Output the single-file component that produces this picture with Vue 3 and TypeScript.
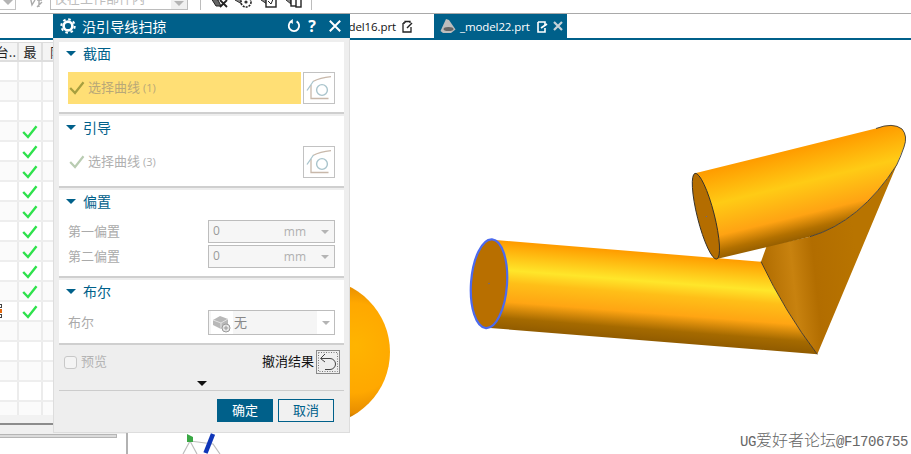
<script setup lang="ts">
const rows: number[] = Array.from({ length: 18 }, (_, i) => i)
const hasCheck = (i: number): boolean => i >= 3 && i <= 12
interface Sel { label: string; count: number; active: boolean }
const selections: Record<string, Sel> = {
  section: { label: '选择曲线', count: 1, active: true },
  guide: { label: '选择曲线', count: 3, active: false }
}
const offsets: string[] = ['第一偏置', '第二偏置']
</script>

<template>
  <div class="page">
    <div class="toolbar">
      <div class="tail"><span class="arrow grey"></span></div>
      <svg class="tb-undo" width="14" height="20" viewBox="0 0 14 20">
        <path d="M1 8 L3 17 L6 12 M8 12 H13 M10 12 V19 M13 14 L8 19" stroke="#aaa" stroke-width="1.4" fill="none" />
      </svg>
      <div class="tb-select">
        <span class="tb-text">仅在工作部件内</span>
        <span class="tb-drop"><span class="arrow grey"></span></span>
      </div>
      <i class="sep first"></i>
      <svg class="tb-icon i1" width="18" height="20" viewBox="0 0 18 20">
        <path d="M1 10 L8 12 L11 18 L6 18 Z" fill="#666" stroke="#222" />
        <path d="M10 12 L17 19 M17 12 L10 19" stroke="#222" stroke-width="1.8" />
      </svg>
      <svg class="tb-icon i2" width="18" height="20" viewBox="0 0 18 20">
        <path d="M0 12 L7 8 L11 10 L7 16 Z" fill="#888" stroke="#333" />
        <circle cx="11" cy="14" r="5" fill="#fff" stroke="#222" stroke-width="1.6" stroke-dasharray="2 1" />
        <circle cx="11" cy="14" r="1.6" fill="#333" />
      </svg>
      <svg class="tb-icon i3" width="18" height="20" viewBox="0 0 18 20">
        <path d="M1 12 L7 8 L7 16 Z" fill="#888" stroke="#333" />
        <rect x="6" y="6" width="10" height="13" fill="#fff" stroke="#222" stroke-width="1.4" />
        <path d="M8 13 L11 16 L14 9" stroke="#222" fill="none" />
      </svg>
      <svg class="tb-icon i4" width="18" height="20" viewBox="0 0 18 20">
        <path d="M1 12 L6 8 L6 16 Z" fill="#888" stroke="#333" />
        <rect x="6" y="5" width="6" height="13" fill="#fff" stroke="#222" stroke-width="1.4" />
        <rect x="11" y="9" width="5" height="10" fill="#fff" stroke="#222" stroke-width="1.4" />
      </svg>
      <i class="sep last"></i>
    </div>

    <div class="tabs">
      <div class="tab plain">
        <span>_model16.prt</span>
        <svg width="11" height="13" viewBox="0 0 11 13">
          <path d="M8 3 V1.5 H3 V3 M1 3 H3 M1 3 V12 H9 V7" stroke="#222" stroke-width="1.3" fill="none" />
          <path d="M5 8 L10 3" stroke="#222" stroke-width="1.4" />
        </svg>
      </div>
      <div class="tab active">
        <svg class="part" width="16" height="16" viewBox="0 0 16 16">
          <path d="M0.5 13 L6 1 L9 2 L15.5 11.5 L11 15 L3 15 Z" fill="#bdbdbd" />
          <ellipse cx="8.5" cy="11" rx="5" ry="2" fill="#666" />
        </svg>
        <span>_model22.prt</span>
        <svg class="doc" width="11" height="13" viewBox="0 0 11 13">
          <path d="M1 2 H8 V5 M1 2 V12 H8 V8" stroke="#fff" stroke-width="1.6" fill="none" />
          <path d="M4 8 L10 4" stroke="#fff" stroke-width="1.8" />
        </svg>
        <svg class="tabx" width="10" height="10" viewBox="0 0 10 10">
          <path d="M1 1 L9 9 M9 1 L1 9" stroke="#c7d2d8" stroke-width="2.2" />
        </svg>
      </div>
    </div>

    <div class="main">
      <div class="left">
        <div class="thead">
          <div class="c c1"><span>台..</span></div>
          <div class="c c2">最</div>
          <div class="c c3">限</div>
        </div>
        <div class="tbody">
          <div v-for="i in rows" :key="i" class="row" :class="{ alt: i % 2 === 1 }">
            <div class="c c1">
              <span v-if="i === 12" class="mini"><b></b><b class="o"></b><b></b></span>
            </div>
            <div class="c c2">
              <svg v-if="hasCheck(i)" width="16" height="14" viewBox="0 0 16 14">
                <path d="M1.2 7 L6 12 L14.5 1.2" stroke="#2ee24c" stroke-width="2.4" fill="none" />
              </svg>
            </div>
            <div class="c c3"></div>
          </div>
        </div>
        <div class="hscroll"></div>
        <div class="lower"></div>
        <div class="sash"></div>
      </div>

      <svg class="canvas" viewBox="128 40 783 414" width="783" height="414">
        <defs>
          <radialGradient id="ball" gradientUnits="userSpaceOnUse" cx="352" cy="350" r="75" fx="355" fy="345">
            <stop offset="0" stop-color="#ffb400" />
            <stop offset="0.6" stop-color="#ffa800" />
            <stop offset="0.85" stop-color="#e88e00" />
            <stop offset="1" stop-color="#7a4c00" />
          </radialGradient>
          <linearGradient id="tube" gradientUnits="userSpaceOnUse" x1="620" y1="251" x2="613" y2="341">
            <stop offset="0" stop-color="#ff9d00" />
            <stop offset="0.31" stop-color="#ffe62a" />
            <stop offset="0.45" stop-color="#ffbf18" />
            <stop offset="0.66" stop-color="#ffa513" />
            <stop offset="0.84" stop-color="#a56a00" />
            <stop offset="1" stop-color="#8c5800" />
          </linearGradient>
          <linearGradient id="upper" gradientUnits="userSpaceOnUse" x1="795" y1="150" x2="817" y2="240">
            <stop offset="0" stop-color="#ff9d00" />
            <stop offset="0.36" stop-color="#ffcb15" />
            <stop offset="0.7" stop-color="#ffa313" />
            <stop offset="0.86" stop-color="#b27000" />
            <stop offset="1" stop-color="#855400" />
          </linearGradient>
          <linearGradient id="cone" gradientUnits="userSpaceOnUse" x1="765" y1="300" x2="860" y2="290">
            <stop offset="0" stop-color="#b06c00" />
            <stop offset="0.32" stop-color="#c8820f" />
            <stop offset="0.55" stop-color="#b26d00" />
            <stop offset="1" stop-color="#b87400" />
          </linearGradient>
        </defs>

        <circle cx="317" cy="352" r="73" fill="url(#ball)" />

        <path d="M761 261.7 L766.7 246 L810 236.7 Q860 222 896.7 165 L817.3 354.3 Q785 312 761 261.7 Z" fill="url(#cone)" />
        <path d="M493.3 239.8 L761 261.7 Q785 312 817.3 354.3 L486.7 327.7 Z" fill="url(#tube)" />
        <path d="M761 261.7 Q785 312 817.3 354.3" stroke="#3a3026" stroke-width="0.9" fill="none" />
        <ellipse cx="489" cy="283.7" rx="18" ry="44.5" transform="rotate(4 489 283.7)" fill="#b86f00" stroke="#4c6aee" stroke-width="2.2" />
        <circle cx="489" cy="283.5" r="0.7" fill="#5565b0" />

        <path d="M695 173.3 L876.7 128.3 Q893 122 902 129 Q908 136 904 147 Q899 158 896.7 165 Q860 222 810 236.7 L716.7 259 Z" fill="url(#upper)" />
        <path d="M876 128.5 Q893 122 902 129 Q908 136 904 147 Q901 156 896.7 165 Q860 222 810 236.7" stroke="#3b3b3b" stroke-width="0.9" fill="none" />
        <ellipse cx="705.9" cy="216.2" rx="8.5" ry="44.2" transform="rotate(-14.2 705.9 216.2)" fill="#b46d00" stroke="#33302a" stroke-width="0.9" />
        <circle cx="706.5" cy="216.5" r="0.6" fill="#5565b0" />

        <path d="M183 454 L190 441 M190 441 L213 444 L220 454 M190 441 L197 454" stroke="#bdbdbd" stroke-width="1.2" fill="none" />
        <path d="M187 434 L193 437 L193 442 L187 442 Z" fill="#3aa845" />
        <path d="M213 434 L205.5 453" stroke="#0f36b8" stroke-width="4.5" />
      </svg>
    </div>

    <div class="mark"><span class="lat">UG</span><span class="cjk">爱好者论坛</span><span class="lat">@F1706755</span></div>

    <div class="dialog">
      <div class="title">
        <svg class="gear" width="16" height="16" viewBox="0 0 16 16">
          <circle cx="8" cy="8" r="4.4" fill="none" stroke="#fff" stroke-width="2.6" />
          <circle cx="8" cy="8" r="6.7" fill="none" stroke="#fff" stroke-width="2" stroke-dasharray="2.6 2.66" />
        </svg>
        <span class="title-text">沿引导线扫掠</span>
        <svg class="t-reset" width="14" height="14" viewBox="0 0 14 14">
          <path d="M4 2.6 A5.2 5.2 0 1 0 9.6 2.4" fill="none" stroke="#fff" stroke-width="1.8" />
          <path d="M5.8 0 V5 L2.4 2.6 Z" fill="#fff" />
        </svg>
        <span class="t-q">?</span>
        <svg class="t-x" width="12" height="12" viewBox="0 0 12 12">
          <path d="M0.8 0.8 L11.2 11.2 M11.2 0.8 L0.8 11.2" stroke="#fff" stroke-width="2" />
        </svg>
      </div>

      <div class="sections">
        <section v-for="(s, key) in selections" :key="key" class="sec">
          <div class="head"><span class="tri"></span>{{ key === 'section' ? '截面' : '引导' }}</div>
          <div class="sel-row">
            <div class="sel" :class="{ on: s.active }">
              <svg width="16" height="14" viewBox="0 0 16 14">
                <path d="M1.2 7 L6 12 L14.5 1.2" :stroke="s.active ? '#a79f3e' : '#b9ccb2'" stroke-width="2.2" fill="none" />
              </svg>
              <span class="sel-text">{{ s.label }} <small>({{ s.count }})</small></span>
            </div>
            <div class="curve-btn">
              <svg width="30" height="30" viewBox="0 0 30 30">
                <path d="M7 12 V25.5 H24.5" stroke="#c8b8aa" stroke-width="1.3" fill="none" />
                <path d="M9 8.5 Q16 4.5 27 3.6" stroke="#c8b8aa" stroke-width="1.3" fill="none" />
                <path d="M3 17.5 L9.5 8" stroke="#a9c4cc" stroke-width="1.3" />
                <circle cx="18" cy="17" r="5.4" fill="none" stroke="#a9c4cc" stroke-width="1.4" />
              </svg>
            </div>
          </div>
        </section>

        <section class="sec">
          <div class="head"><span class="tri"></span>偏置</div>
          <div class="fields">
            <div v-for="o in offsets" :key="o" class="field">
              <span class="f-label">{{ o }}</span>
              <div class="input"><span class="val">0</span><span class="unit">mm</span><span class="arrow small"></span></div>
            </div>
          </div>
        </section>

        <section class="sec">
          <div class="head"><span class="tri"></span>布尔</div>
          <div class="field">
            <span class="f-label">布尔</span>
            <div class="bool">
              <div class="bool-main">
                <span class="bool-ic">
                  <svg width="20" height="20" viewBox="0 0 20 20">
                    <path d="M1 7 L8 3 L16 6 L16 12 L9 16 L1 12 Z" fill="#b8b8b8" />
                    <path d="M1 7 L9 10 L16 6 M9 10 V16" stroke="#e2e2e2" fill="none" />
                    <circle cx="14" cy="15" r="4" fill="#e8e8e8" stroke="#999" />
                    <path d="M11.8 15 H16.2 M14 12.8 V17.2" stroke="#999" />
                  </svg>
                </span>
                <span class="bool-text">无</span>
              </div>
              <span class="bool-drop"><span class="arrow small"></span></span>
            </div>
          </div>
        </section>
      </div>

      <div class="foot">
        <label class="check"><span class="box"></span><span class="lift">预览</span></label>
        <span class="undo-text">撤消结果</span>
        <div class="undo-btn">
          <svg width="20" height="20" viewBox="0 0 20 20">
            <rect x="0.5" y="0.5" width="19" height="19" fill="none" stroke="#777" stroke-dasharray="1 1.5" />
            <path d="M3 6.5 H12 A5.5 5.5 0 0 1 12 17.5 H7" fill="none" stroke="#444" stroke-width="1" />
            <path d="M7 2 L2.5 6.5 L7 10" fill="none" stroke="#444" stroke-width="1" />
          </svg>
        </div>
      </div>
      <div class="more"><span class="more-tri"></span></div>
      <div class="actions">
        <div class="btn ok">确定</div>
        <div class="btn cancel">取消</div>
      </div>
    </div>
  </div>
</template>

<style>
html, body { margin: 0; padding: 0; background: #fff; }
</style>

<style scoped>
.page {
  position: relative;
  width: 911px;
  height: 454px;
  overflow: hidden;
  background: #fff;
  display: flex;
  flex-direction: column;
  font-family: "Noto Sans CJK SC", "Noto Sans", sans-serif;
}
.arrow { display: inline-block; width: 0; height: 0; border-left: 5px solid transparent; border-right: 5px solid transparent; border-top: 5px solid #555; }
.arrow.grey { border-top-color: #b4b4b4; }
.arrow.small { border-left-width: 4px; border-right-width: 4px; border-top: 4px solid #b4b4b4; }

/* toolbar */
.toolbar {
  height: 14px;
  flex: none;
  box-sizing: border-box;
  border-bottom: 1px solid #a9a9a9;
  padding-bottom: 3px;
  display: flex;
  align-items: flex-end;
  overflow: hidden;
}
.tail {
  width: 16px; height: 22px; flex: none; box-sizing: border-box;
  border: 1px solid #c4c4c4; border-left: 0;
  display: flex; align-items: flex-end; justify-content: flex-end; padding: 0 2px 4px 0;
}
.tb-undo { flex: none; margin-left: 13px; margin-bottom: 2px; }
.tb-select {
  flex: none; margin-left: 7px; width: 138px; height: 24px; box-sizing: border-box;
  border: 1px solid #bcbcbc; display: flex; align-items: flex-end; background: #fff;
}
.tb-text { flex: 1; font-size: 13px; line-height: 18px; color: #bdbdbd; padding: 0 0 2px 3px; white-space: nowrap; }
.tb-drop { width: 16px; height: 100%; background: #f0f0f0; display: flex; align-items: flex-end; justify-content: center; padding-bottom: 3px; box-sizing: border-box; }
.sep { display: block; width: 1px; height: 14px; background: #bcbcbc; flex: none; }
.sep.first { margin-left: 12px; }
.sep.last { margin-left: 8px; }
.tb-icon { flex: none; margin-bottom: 2px; }
.i1 { margin-left: 9px; }
.i2, .i3, .i4 { margin-left: 7px; }

/* tabs */
.tabs {
  height: 26px; flex: none; box-sizing: border-box;
  border-bottom: 2px solid #00608a;
  display: flex;
  padding-left: 53px;
  font-family: "Open Sans", "Noto Sans", sans-serif;
  font-size: 11.5px;
  letter-spacing: -0.1px;
}
.tab { height: 24px; display: flex; align-items: center; box-sizing: border-box; }
.tab.plain { width: 381px; justify-content: flex-end; padding-right: 21px; color: #111; gap: 6px; }
.tab.active { width: 133px; background: #00608a; color: #fff; padding-left: 6px; }
.part { margin-right: 4px; flex: none; }
.doc { margin-left: 7px; flex: none; }
.tabx { margin-left: 5px; flex: none; }

/* main */
.main { flex: 1; display: flex; min-height: 0; }
.left {
  width: 128px; flex: none; box-sizing: border-box; padding-top: 2px;
  border-right: 2px solid #b2b2b2;
  display: flex; flex-direction: column; overflow: hidden;
}
.thead {
  height: 20px; flex: none; display: flex; box-sizing: border-box; background: #f4f4f4;
  border-top: 1px solid #dcdcdc; border-bottom: 2px solid #dedede;
  font-size: 13px; color: #222;
}
.tbody { height: 353px; flex: none; overflow: hidden; }
.row { height: 20px; display: flex; box-sizing: border-box; border-bottom: 2px solid #eeeeee; background: #fff; }
.row.alt { background: #fbfbfb; }
.c { box-sizing: border-box; display: flex; align-items: center; justify-content: center; overflow: hidden; border-right: 2px solid #ececec; }
.c1 { width: 19px; justify-content: flex-end; padding-right: 1px; }
.c2 { width: 24px; padding-top: 2px; }
.c3 { width: 24px; justify-content: flex-start; padding-left: 7px; border-right: 0; }
.thead .c2 { padding-top: 0; }
.thead .c { border-right-color: #dedede; }
.mini { display: flex; flex-direction: column; gap: 1px; align-self: center; margin-right: auto; margin-left: -2px; }
.mini b { display: block; width: 4px; height: 4px; box-sizing: border-box; border: 1px solid #444; background: #fff; }
.mini b.o { background: #e56a10; border-color: #e56a10; }
.hscroll { height: 8px; flex: none; background: #f2f2f2; border-bottom: 2px solid #8c8c8c; }
.lower { height: 9px; flex: none; background: #f0f0f0; }
.sash { width: 117px; height: 4px; flex: none; box-sizing: border-box; background: #dbdbdb; border: 1px solid #b5b5b5; border-left: 0; }
.canvas { flex: 1; display: block; min-width: 0; }

.mark {
  position: absolute; right: 3px; bottom: 3px; color: #666; line-height: 18px;
  white-space: nowrap; display: flex; align-items: baseline;
}
.lat { font-family: "Liberation Mono", monospace; font-size: 14px; letter-spacing: -0.4px; }
.cjk { font-family: "Noto Sans CJK SC", sans-serif; font-size: 16px; font-weight: 300; }

/* dialog */
.dialog {
  position: absolute; left: 53px; top: 14px; width: 297px; height: 419px; box-sizing: border-box;
  background: #eeeeee; border: 1px solid #dddddd; border-top: 0;
  display: flex; flex-direction: column;
}
.title {
  height: 24px; flex: none; background: #00608a; color: #fff; display: flex; align-items: center;
  margin: 0 -1px; padding-left: 7px;
}
.title-text { font-size: 14px; margin-left: 6px; flex: 1; letter-spacing: 0.1px; }
.t-reset { margin-right: 7px; }
.t-q { font-family: "Open Sans", sans-serif; font-weight: 700; font-size: 16px; line-height: 16px; margin-right: 13px; }
.t-x { margin-right: 9px; }

.sections { padding: 4px 5px 0; display: flex; flex-direction: column; gap: 2px; }
.sec { background: #fff; border-bottom: 2px solid #cfcfcf; padding-bottom: 8px; }
.head {
  height: 30px; box-sizing: border-box; padding: 0 0 8px 7px; display: flex; align-items: center;
  color: #00608a; font-size: 14px;
}
.tri { width: 0; height: 0; border-left: 5px solid transparent; border-right: 5px solid transparent; border-top: 5px solid #00608a; margin-right: 7px; }
.sel-row { display: flex; padding-left: 9px; padding-right: 9px; gap: 2px; }
.sel { flex: 1; height: 32px; display: flex; align-items: center; gap: 3px; }
.sel.on { background: #ffdf75; }
.sel svg { margin-left: 1px; flex: none; }
.sel-text { font-size: 13px; color: #b0b0b0; padding-bottom: 3px; }
.sel.on .sel-text { color: #b8a878; }
.sel-text small { font-family: "Open Sans", sans-serif; font-size: 11px; }
.curve-btn { width: 32px; height: 32px; box-sizing: border-box; border: 1px solid #c2c2c2; background: #fff; flex: none; overflow: hidden; }
.curve-btn svg { display: block; }
.fields { display: flex; flex-direction: column; gap: 2px; }
.field { display: flex; align-items: center; padding: 0 9px; justify-content: space-between; }
.f-label { font-size: 13px; color: #aaaaaa; padding-bottom: 2px; }
.input {
  width: 127px; height: 23px; box-sizing: border-box; border: 1px solid #bdbdbd; background: #f6f6f6;
  display: flex; align-items: center; padding: 0 5px 0 4px;
  font-family: "Open Sans", sans-serif; color: #aaa; font-size: 12px;
}
.val { color: #9a9a9a; margin-top: -3px; }
.unit { margin-left: auto; margin-right: 15px; font-size: 12px; color: #b0b0b0; }
.bool { width: 127px; height: 25px; box-sizing: border-box; border: 1px solid #bdbdbd; background: #fff; display: flex; align-items: center; }
.bool-main { width: 108px; height: 23px; background: #f5f5f5; display: flex; align-items: center; }
.bool-ic { width: 22px; height: 23px; background: #fff; display: flex; align-items: center; justify-content: center; margin-left: 2px; }
.bool-text { font-size: 13px; color: #888; margin-left: 1px; padding-bottom: 3px; }
.bool-drop { flex: 1; display: flex; justify-content: center; }

.foot { display: flex; align-items: center; height: 24px; padding: 5px 9px 0 10px; flex: none; }
.check { display: flex; align-items: center; font-size: 13px; color: #b4b4b4; margin-right: auto; }
.lift { padding-bottom: 3px; }
.box { width: 13px; height: 13px; box-sizing: border-box; border: 1px solid #c8c8c8; border-radius: 3px; background: #f4f4f4; margin-right: 4px; }
.undo-text { font-size: 13px; color: #111; margin-right: 2px; padding-bottom: 3px; }
.undo-btn { width: 24px; height: 24px; box-sizing: border-box; border: 1px solid #8a8a8a; display: flex; align-items: center; justify-content: center; background: #eee; }
.more {
  margin: 0 5px; height: 17px; flex: none; box-sizing: border-box; border-bottom: 1px solid #cccccc;
  display: flex; justify-content: center; align-items: center; padding-top: 3px;
}
.more-tri { width: 0; height: 0; border-left: 5px solid transparent; border-right: 5px solid transparent; border-top: 5px solid #111; }
.actions { display: flex; justify-content: flex-end; gap: 5px; padding: 8px 15px 0 0; }
.btn { width: 56px; height: 23px; box-sizing: border-box; display: flex; align-items: center; justify-content: center; font-size: 13px; padding-bottom: 2px; }
.ok { background: #00608a; color: #fff; }
.cancel { border: 1px solid #00608a; color: #00608a; background: #f1f1f1; }
</style>
